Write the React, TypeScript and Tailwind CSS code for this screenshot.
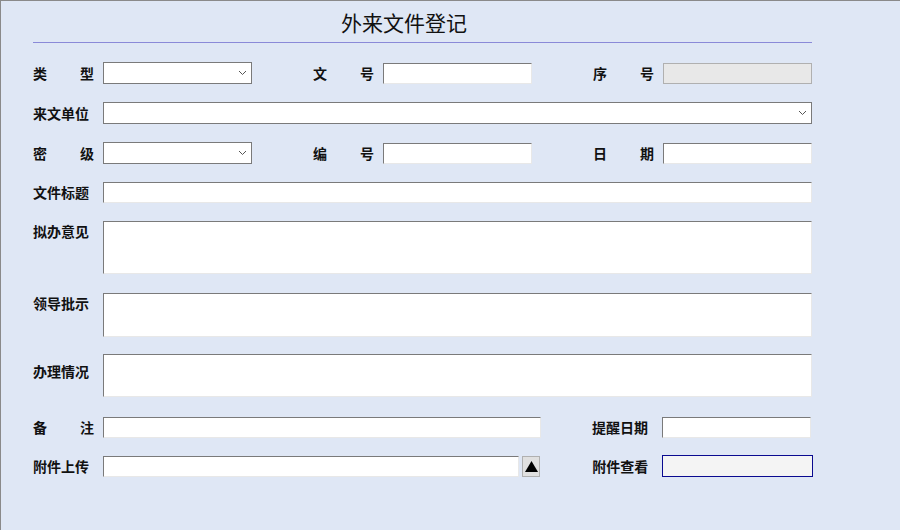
import React from "react";

const inp = "h-[21px] bg-white border border-t-[#7a7a7a] border-l-[#7a7a7a] border-r-[#e8e8e8] border-b-[#e8e8e8]";
const Label = ({ t, w = "w-[70px]", c = "" }: { t: string; w?: string; c?: string }) => (
  <div className={`${w} ${c} shrink-0 text-[14px] font-bold text-[#111] leading-[21px]`}>{t}</div>
);
const Spaced = ({ a, b }: { a: string; b: string }) => (
  <div className="w-[70px] shrink-0 flex text-[14px] font-bold text-[#111] leading-[21px]">
    <span className="w-[47px]">{a}</span><span>{b}</span>
  </div>
);
const Select = ({ w }: { w: string }) => (
  <div className={`${w} h-[22px] bg-white border border-[#7a7a7a] flex items-center justify-end pr-[4px]`}>
    <svg width="9" height="6" viewBox="0 0 9 6"><path d="M1 1l3.5 3.5L8 1" stroke="#555" fill="none" strokeWidth="1" /></svg>
  </div>
);

export default function App() {
  return (
    <div className="w-[900px] h-[530px] bg-[#dfe7f5] border-l border-t border-[#8a8a8a] overflow-hidden" style={{ fontFamily: '"Noto Sans CJK SC", sans-serif' }}>
      <div className="pl-[32px] w-[812px]">
        <div className="h-[41px] pt-[6px] pl-[308px] text-[21px] text-[#111] leading-[30px]">外来文件登记</div>
        <div className="h-px bg-[#8a8ad8] w-[779px]" />
        <div className="flex items-center mt-[19px]">
          <Spaced a="类" b="型" /><Select w="w-[149px]" />
          <div className="w-[61px]" /><Spaced a="文" b="号" /><div className={`${inp} w-[149px]`} />
          <div className="w-[61px]" /><Spaced a="序" b="号" /><div className="h-[21px] w-[149px] bg-[#e8e8e8] border border-[#b0b0b0]" />
        </div>
        <div className="flex items-center mt-[18px]">
          <Label t="来文单位" /><Select w="w-[709px]" />
        </div>
        <div className="flex items-center mt-[18px]">
          <Spaced a="密" b="级" /><Select w="w-[149px]" />
          <div className="w-[61px]" /><Spaced a="编" b="号" /><div className={`${inp} w-[149px]`} />
          <div className="w-[61px]" /><Spaced a="日" b="期" /><div className={`${inp} w-[149px]`} />
        </div>
        <div className="flex items-center mt-[18px]">
          <Label t="文件标题" /><div className={`${inp} w-[709px]`} />
        </div>
        <div className="flex items-start mt-[18px]">
          <Label t="拟办意见" /><div className={`${inp} w-[709px] h-[53px]`} />
        </div>
        <div className="flex items-start mt-[19px]">
          <Label t="领导批示" /><div className={`${inp} w-[709px] h-[44px]`} />
        </div>
        <div className="flex items-start mt-[17px]">
          <Label t="办理情况" c="pt-[7px]" /><div className={`${inp} w-[709px] h-[43px]`} />
        </div>
        <div className="flex items-center mt-[20px]">
          <Spaced a="备" b="注" /><div className={`${inp} w-[438px]`} />
          <div className="w-[51px]" /><Label t="提醒日期" /><div className={`${inp} w-[149px]`} />
        </div>
        <div className="flex items-center mt-[17px]">
          <Label t="附件上传" /><div className={`${inp} w-[417px]`} />
          <div className="ml-[3px] w-[18px] h-[21px] bg-[#e0e0e0] border border-[#b0b0b0] flex items-center justify-center">
            <svg width="13" height="11" viewBox="0 0 13 11"><path d="M6.5 0L13 11H0z" fill="#000" /></svg>
          </div>
          <div className="w-[52px]" /><Label t="附件查看" /><div className="h-[22px] w-[151px] bg-[#f4f4f4] border border-[#0a0a90]" />
        </div>
      </div>
    </div>
  );
}
